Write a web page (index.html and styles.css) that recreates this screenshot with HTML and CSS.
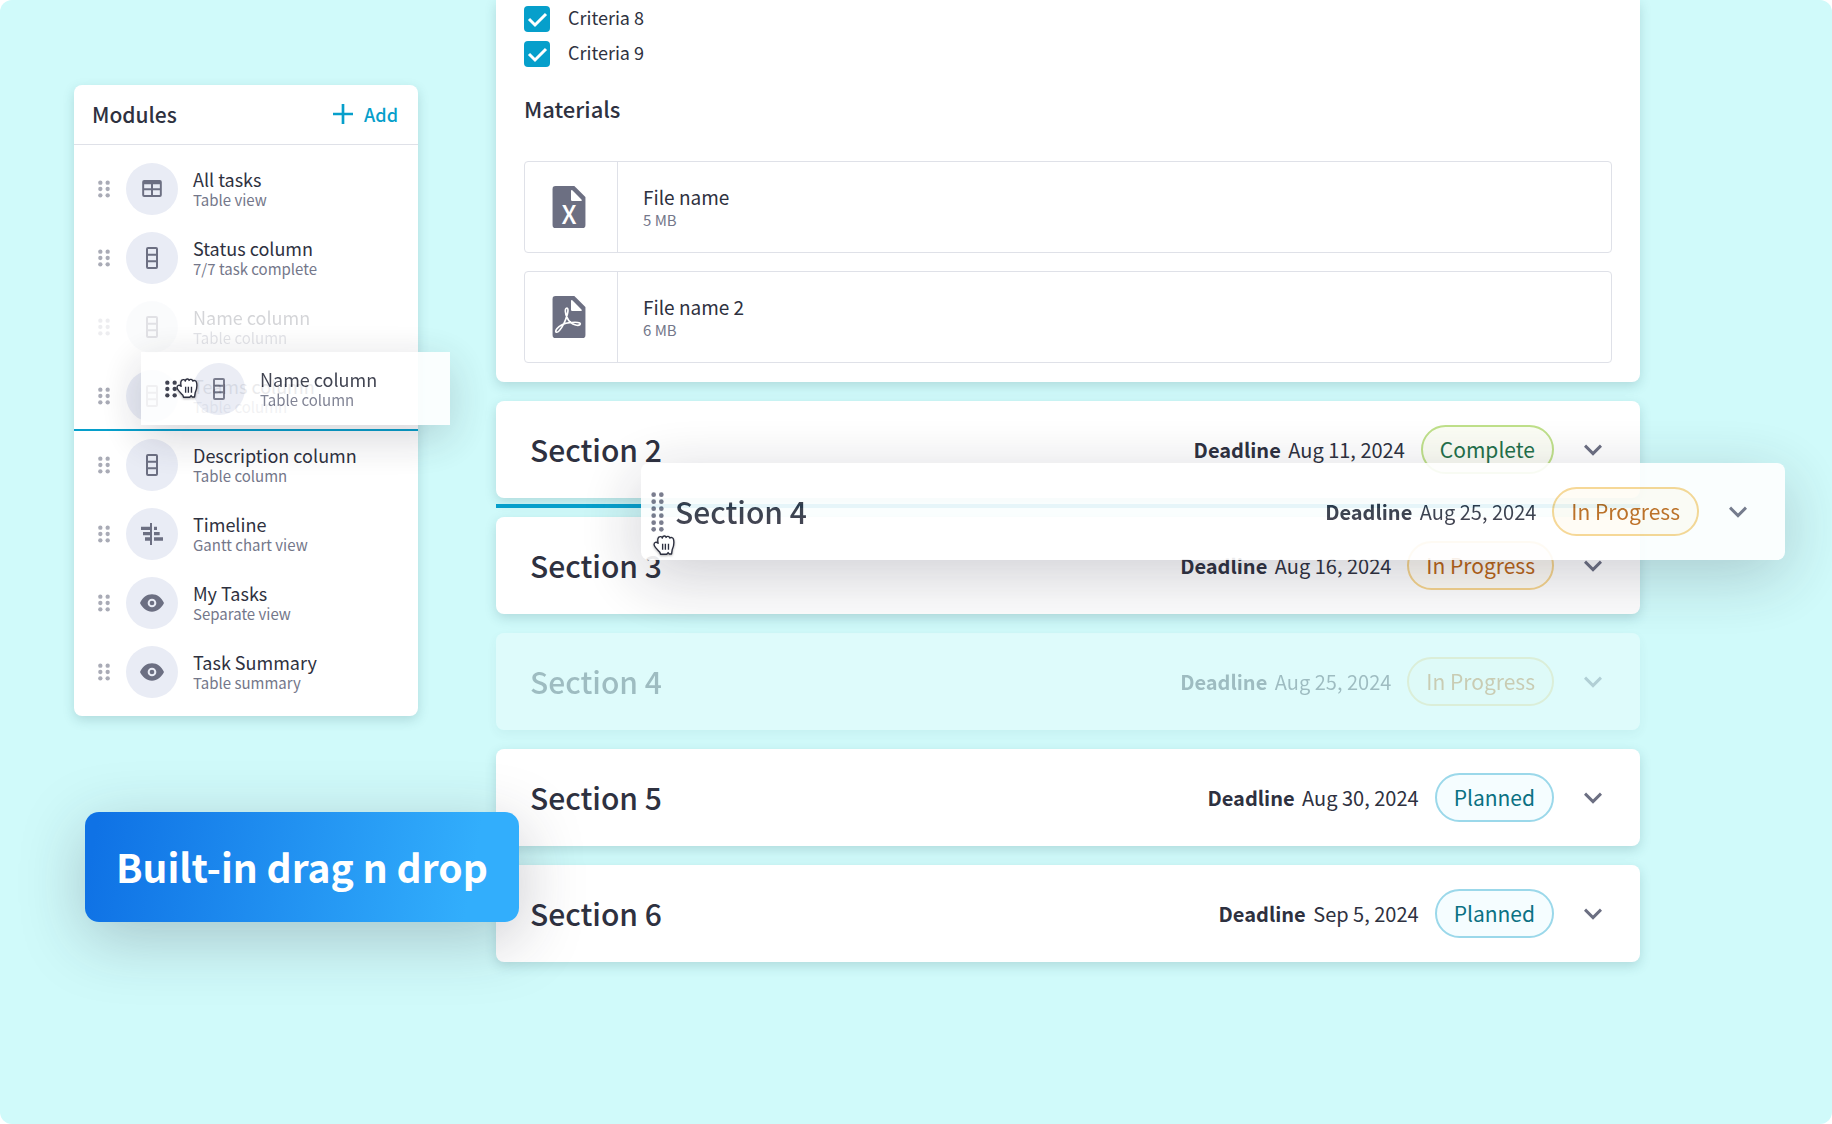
FILE: index.html
```html
<!DOCTYPE html>
<html lang="en">
<head>
<meta charset="utf-8">
<title>Built-in drag n drop</title>
<link rel="stylesheet" href="styles.css">
</head>
<body>
<svg class="sprite" aria-hidden="true">
  <symbol id="grip" viewBox="0 0 36 52"><g fill="currentColor"><circle cx="7" cy="7" r="6.5"/><circle cx="29" cy="7" r="6.5"/><circle cx="7" cy="26" r="6.5"/><circle cx="29" cy="26" r="6.5"/><circle cx="7" cy="45" r="6.5"/><circle cx="29" cy="45" r="6.5"/></g></symbol>
  <symbol id="grip-long" viewBox="0 0 39 118"><g fill="currentColor"><circle cx="8" cy="7" r="7"/><circle cx="31" cy="7" r="7"/><circle cx="8" cy="28" r="7"/><circle cx="31" cy="28" r="7"/><circle cx="8" cy="49" r="7"/><circle cx="31" cy="49" r="7"/><circle cx="8" cy="70" r="7"/><circle cx="31" cy="70" r="7"/><circle cx="8" cy="91" r="7"/><circle cx="31" cy="91" r="7"/><circle cx="8" cy="111" r="7"/><circle cx="31" cy="111" r="7"/></g></symbol>
  <symbol id="table" viewBox="0 0 60 52"><path fill="currentColor" fill-rule="evenodd" d="M6 0H54Q60 0 60 6V46Q60 52 54 52H6Q0 52 0 46V6Q0 0 6 0ZM6 13V25H27V13ZM33 13V25H54V13ZM6 31V46H27V31ZM33 31V46H54V31Z"/></symbol>
  <symbol id="column" viewBox="0 0 36 66"><path fill="currentColor" fill-rule="evenodd" d="M6 0H30Q36 0 36 6V60Q36 66 30 66H6Q0 66 0 60V6Q0 0 6 0ZM6 6V20H30V6ZM6 26V40H30V26ZM6 46V60H30V46Z"/></symbol>
  <symbol id="gantt" viewBox="0 0 66 66"><path fill="currentColor" d="M27 0H33V66H27ZM0 11H27V21H0ZM6 27H27V37H6ZM12 43H27V53H12ZM39 11H48V21H39ZM39 27H56V37H39ZM39 43H66V53H39Z"/></symbol>
  <symbol id="eye" viewBox="0 0 72 52"><path fill="currentColor" fill-rule="evenodd" d="M0 26C8 10 20 0 36 0S64 10 72 26C64 42 52 52 36 52S8 42 0 26ZM36 13A13 13 0 1 0 36 39A13 13 0 1 0 36 13ZM36 19A7 7 0 1 1 36 33A7 7 0 1 1 36 19Z"/></symbol>
  <symbol id="chevron" viewBox="0 0 54 34"><path fill="none" stroke="currentColor" stroke-width="9" d="M3 4L27 28L51 4"/></symbol>
  <symbol id="plus" viewBox="0 0 60 60"><path fill="currentColor" d="M26 0H34V26H60V34H34V60H26V34H0V26H26Z"/></symbol>
  <symbol id="file" viewBox="0 0 100 126"><path fill="currentColor" d="M10 0H66L100 34V116Q100 126 90 126H10Q0 126 0 116V10Q0 0 10 0Z"/><path fill="#fff" d="M56 14Q57 11 60 13L88 41Q90 45 86 45H60Q56 45 56 41Z"/></symbol>
  <symbol id="hand" viewBox="0 0 64 58"><path fill="#fff" stroke="#2c2f3f" stroke-width="4" stroke-linejoin="round" d="M15 24C13 15 13 9 17 6C21 3 26 5 27 9C28 1 37 1 38 7C40 2 48 3 49 9C52 6 59 7 60 14C62 26 60 34 56 42L54 55H47L44 51L40 56H22L20 50C12 42 5 36 3 28C3 20 10 19 15 24Z"/><path stroke="#2c2f3f" stroke-width="4" d="M28 25V43M36 25V43M45 25V43"/></symbol>
</svg>

<main class="stage">
  <aside class="modules">
    <header class="modules-head">
      <h2>Modules</h2>
      <button class="add" type="button"><svg><use href="#plus"/></svg>Add</button>
    </header>
    <ul class="module-list">
      <li class="module"><svg class="grip"><use href="#grip"/></svg><span class="disc"><svg class="i-table"><use href="#table"/></svg></span><div><strong>All tasks</strong><small>Table view</small></div></li>
      <li class="module"><svg class="grip"><use href="#grip"/></svg><span class="disc"><svg class="i-column"><use href="#column"/></svg></span><div><strong>Status column</strong><small>7/7 task complete</small></div></li>
      <li class="module ghost"><svg class="grip"><use href="#grip"/></svg><span class="disc"><svg class="i-column"><use href="#column"/></svg></span><div><strong>Name column</strong><small>Table column</small></div></li>
      <li class="module drop-after"><svg class="grip"><use href="#grip"/></svg><span class="disc"><svg class="i-column"><use href="#column"/></svg></span><div><strong>Teams column</strong><small>Table column</small></div></li>
      <li class="module"><svg class="grip"><use href="#grip"/></svg><span class="disc"><svg class="i-column"><use href="#column"/></svg></span><div><strong>Description column</strong><small>Table column</small></div></li>
      <li class="module"><svg class="grip"><use href="#grip"/></svg><span class="disc"><svg class="i-gantt"><use href="#gantt"/></svg></span><div><strong>Timeline</strong><small>Gantt chart view</small></div></li>
      <li class="module"><svg class="grip"><use href="#grip"/></svg><span class="disc"><svg class="i-eye"><use href="#eye"/></svg></span><div><strong>My Tasks</strong><small>Separate view</small></div></li>
      <li class="module"><svg class="grip"><use href="#grip"/></svg><span class="disc"><svg class="i-eye"><use href="#eye"/></svg></span><div><strong>Task Summary</strong><small>Table summary</small></div></li>
    </ul>
    <div class="module-drag">
      <div class="module"><svg class="grip"><use href="#grip"/></svg><span class="disc"><svg class="i-column"><use href="#column"/></svg></span><div><strong>Name column</strong><small>Table column</small></div></div>
    </div>
    <svg class="hand hand-module"><use href="#hand"/></svg>
  </aside>

  <div class="sections">
    <section class="card details">
      <label class="check"><input type="checkbox" checked><span>Criteria 8</span></label>
      <label class="check"><input type="checkbox" checked><span>Criteria 9</span></label>
      <h3>Materials</h3>
      <div class="file">
        <div class="file-icon"><svg viewBox="0 0 100 126"><use href="#file"/><text x="50" y="113" text-anchor="middle" class="file-letter">X</text></svg></div>
        <div class="file-text"><strong>File name</strong><small>5 MB</small></div>
      </div>
      <div class="file">
        <div class="file-icon"><svg viewBox="0 0 100 126"><use href="#file"/><path fill="none" stroke="#fff" stroke-width="5" stroke-linejoin="round" d="M44 36C36 36 39 54 44 64C50 78 58 84 70 87C82 90 87 84 82 81C74 77 42 79 29 86C15 93 8 104 11 108C16 112 26 100 34 84C42 68 52 38 44 36Z"/></svg></div>
        <div class="file-text"><strong>File name 2</strong><small>6 MB</small></div>
      </div>
    </section>

    <section class="card row drop-below">
      <h2>Section 2</h2>
      <p><b>Deadline</b> Aug 11, 2024</p><span class="badge complete">Complete</span>
      <button class="toggle" type="button" aria-label="Expand Section 2"><svg><use href="#chevron"/></svg></button>
    </section>
    <section class="card row">
      <h2>Section 3</h2>
      <p><b>Deadline</b> Aug 16, 2024</p><span class="badge progress">In Progress</span>
      <button class="toggle" type="button" aria-label="Expand Section 3"><svg><use href="#chevron"/></svg></button>
    </section>
    <section class="card row ghost">
      <h2>Section 4</h2>
      <p><b>Deadline</b> Aug 25, 2024</p><span class="badge progress">In Progress</span>
      <button class="toggle" type="button" aria-label="Expand Section 4"><svg><use href="#chevron"/></svg></button>
    </section>
    <section class="card row">
      <h2>Section 5</h2>
      <p><b>Deadline</b> Aug 30, 2024</p><span class="badge planned">Planned</span>
      <button class="toggle" type="button" aria-label="Expand Section 5"><svg><use href="#chevron"/></svg></button>
    </section>
    <section class="card row">
      <h2>Section 6</h2>
      <p><b>Deadline</b> Sep 5, 2024</p><span class="badge planned">Planned</span>
      <button class="toggle" type="button" aria-label="Expand Section 6"><svg><use href="#chevron"/></svg></button>
    </section>

    <section class="card row section-drag">
      <svg class="grip-long"><use href="#grip-long"/></svg>
      <h2>Section 4</h2>
      <p><b>Deadline</b> Aug 25, 2024</p><span class="badge progress">In Progress</span>
      <button class="toggle" type="button" aria-label="Expand Section 4"><svg><use href="#chevron"/></svg></button>
    </section>
    <svg class="hand hand-section"><use href="#hand"/></svg>
  </div>

  <div class="callout">Built-in drag n drop</div>
</main>
</body>
</html>
```

FILE: styles.css
```css
* { box-sizing: border-box; }

body {
  margin: 0;
  background: #fff;
  color: #2e3140;
  font-family: "Noto Sans CJK SC", "Noto Sans", sans-serif;
}

h2, h3, p, ul { margin: 0; padding: 0; }
svg { display: block; flex: none; }
.sprite { position: absolute; width: 0; height: 0; }

.stage {
  position: relative;
  display: flex;
  align-items: flex-start;
  gap: 78px;
  min-height: 100vh;
  padding: 0 192px 40px 74px;
  border-radius: 12px;
  background: #d0fafa;
  overflow: hidden;
}

/* Modules panel */
.modules {
  position: relative;
  z-index: 2;
  flex: none;
  width: 344px;
  margin-top: 85px;
  border-radius: 8px;
  background: #fff;
  box-shadow: 0 4px 12px rgba(30, 80, 90, .18);
}

.modules-head {
  display: flex;
  align-items: center;
  justify-content: space-between;
  height: 60px;
  padding: 0 20px 2px 18px;
  border-bottom: 1px solid #dfe1e8;
}

.modules-head h2 { font-size: 21px; line-height: 28px; font-weight: 500; }

.add {
  display: flex;
  align-items: center;
  gap: 11px;
  padding: 0;
  border: 0;
  background: none;
  color: #069fcb;
  font: 500 18px/24px "Noto Sans CJK SC", "Noto Sans", sans-serif;
}
.add svg { width: 20px; height: 20px; }

.module-list { padding: 9px 0 10px; list-style: none; }

.module {
  position: relative;
  display: flex;
  align-items: center;
  height: 69px;
  padding-left: 24px;
}
.module strong, .file-text strong {
  display: block;
  font-size: 18px;
  line-height: 22px;
  font-weight: 400;
}
.module small, .file-text small {
  display: block;
  color: #74778a;
  font-size: 15px;
  line-height: 20px;
}
.module.ghost { opacity: .2; }

.grip { width: 12px; height: 18px; margin-right: 16px; color: #a9abb6; }

.disc {
  display: flex;
  flex: none;
  align-items: center;
  justify-content: center;
  width: 52px;
  height: 52px;
  margin-right: 15px;
  border-radius: 50%;
  background: #e9ecf5;
  color: #6c6f82;
}
.i-table { width: 20px; height: 17px; }
.i-column { width: 12px; height: 22px; }
.i-gantt { width: 22px; height: 22px; }
.i-eye { width: 24px; height: 18px; }

.drop-after::after {
  content: "";
  position: absolute;
  right: 0;
  bottom: -1px;
  left: 0;
  height: 2px;
  background: #069fcb;
}

.module-drag {
  position: absolute;
  top: 267px;
  left: 67px;
  width: 309px;
  padding: 2px 0;
  background: #fff;
  box-shadow: 0 12px 44px rgba(40, 40, 60, .22);
  opacity: .9;
}
.module-drag .grip { color: #2e3140; }

/* Sections column */
.sections {
  position: relative;
  z-index: 1;
  display: flex;
  flex: 1;
  flex-direction: column;
  gap: 19px;
  min-width: 0;
}

.card {
  border-radius: 8px;
  background: #fff;
  box-shadow: 0 4px 12px rgba(30, 80, 90, .18);
}

.details { padding: 1px 28px 19px; border-radius: 0 0 8px 8px; }

.check {
  display: flex;
  align-items: center;
  gap: 18px;
  height: 35px;
  font-size: 18px;
  line-height: 24px;
}
.check span { padding-bottom: 4px; }
.check input {
  appearance: none;
  width: 26px;
  height: 26px;
  margin: 0;
  border-radius: 4px;
  background: #069fcb url("data:image/svg+xml,%3Csvg xmlns='http://www.w3.org/2000/svg' viewBox='0 0 26 26'%3E%3Cpath d='M5 13L11 19L22 8' fill='none' stroke='white' stroke-width='3'/%3E%3C/svg%3E");
}

.details h3 {
  margin: 23px 0 39px;
  font-size: 22px;
  line-height: 28px;
  font-weight: 500;
}

.file {
  display: flex;
  height: 92px;
  border: 1px solid #dfe1e8;
  border-radius: 4px;
}
.file + .file { margin-top: 18px; }
.file-icon {
  display: flex;
  align-items: center;
  justify-content: center;
  width: 93px;
  padding-right: 4px;
  border-right: 1px solid #dfe1e8;
  color: #6c6f82;
}
.file-icon svg { width: 34px; height: 42px; overflow: visible; }
.file-letter { fill: #fff; font-size: 76px; font-weight: 500; }
.file-text { padding: 24px 0 0 25px; }
.file-text strong { font-size: 19px; }
.file-text small { line-height: 24px; }

.row {
  position: relative;
  display: flex;
  align-items: center;
  height: 97px;
  padding: 0 28px 0 34px;
}
.row h2 {
  flex: 1;
  padding-bottom: 2px;
  font-size: 30px;
  line-height: 40px;
  font-weight: 500;
}
.row p { margin-right: 16px; font-size: 20px; line-height: 28px; }
.row b { margin-right: 3px; }
.row.ghost { opacity: .3; }

.badge {
  height: 49px;
  padding: 0 17px;
  border: 2px solid;
  border-radius: 25px;
  font-size: 21px;
  line-height: 44px;
}
.complete { border-color: #bfe08a; background: #fbfdf4; color: #23704a; }
.progress { border-color: #f6d48c; background: #fffcf5; color: #ba6414; }
.planned { border-color: #9bd8ea; background: #f5fdff; color: #0b7183; }

.toggle {
  margin-left: 20px;
  padding: 10px;
  border: 0;
  background: none;
  color: #6c6f82;
}
.toggle svg { width: 18px; height: 12px; }

.drop-below::after {
  content: "";
  position: absolute;
  right: 0;
  bottom: -10px;
  left: 0;
  height: 4px;
  background: #069fcb;
}

.section-drag {
  position: absolute;
  top: 463px;
  right: -145px;
  left: 145px;
  padding-left: 10px;
  box-shadow: 0 16px 64px rgba(40, 40, 60, .25);
  opacity: .9;
}
.grip-long { width: 13px; height: 40px; margin-right: 11px; color: #6c6f82; }

.hand { position: absolute; width: 22px; height: 20px; overflow: visible; filter: drop-shadow(0 1px 1px rgba(0, 0, 0, .3)); }
.hand-module { top: 293px; left: 102px; }
.hand-section { top: 535px; left: 157px; }

.callout {
  position: absolute;
  top: 812px;
  left: 85px;
  z-index: 3;
  padding: 28px 31px 30px;
  border-radius: 14px;
  background: linear-gradient(100deg, #0f72e5 3%, #32aefc 88%);
  box-shadow: 0 16px 64px rgba(40, 40, 60, .25);
  color: #fff;
  font-size: 39px;
  line-height: 52px;
  font-weight: 700;
  white-space: nowrap;
}
```
